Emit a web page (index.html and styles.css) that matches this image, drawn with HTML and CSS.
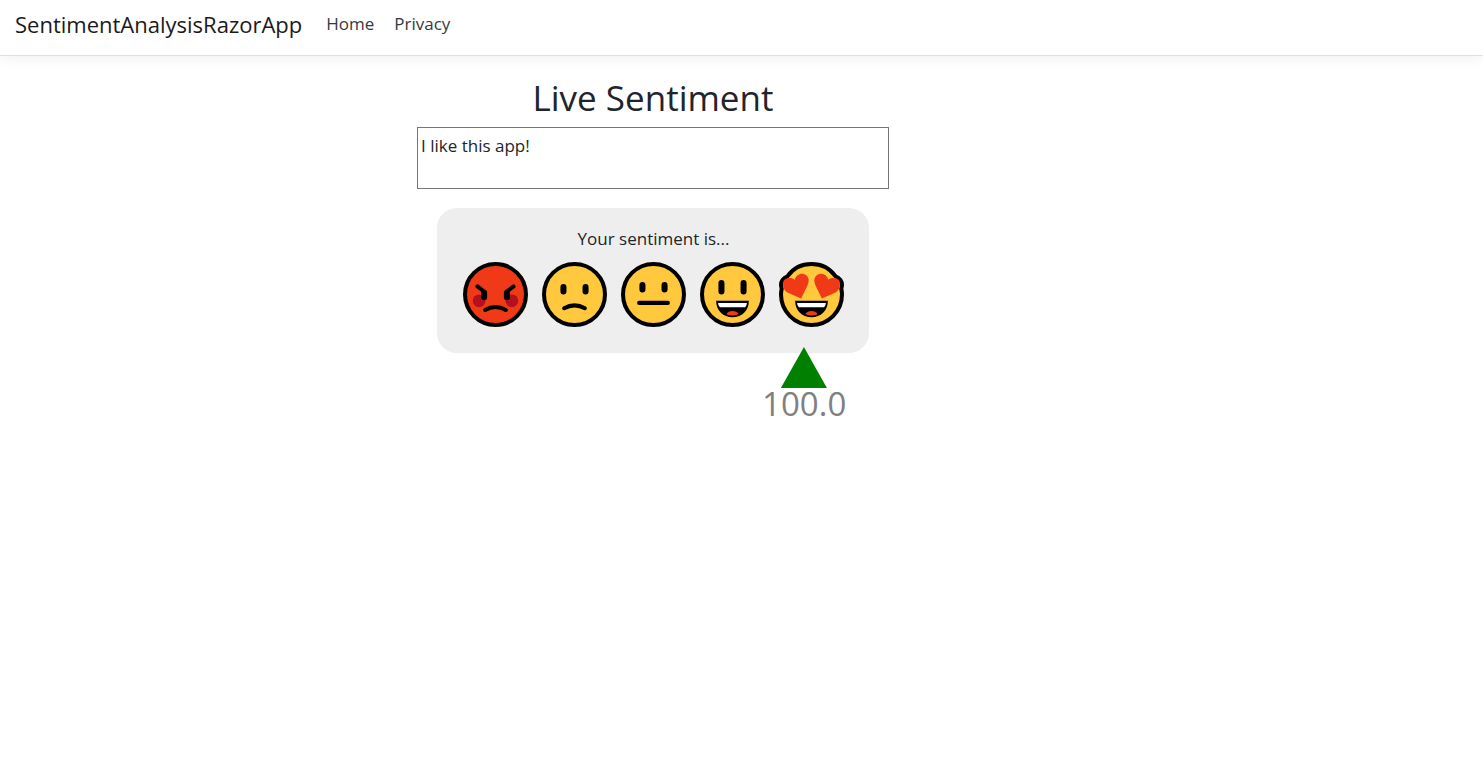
FILE: index.html
```html
<!DOCTYPE html>
<html lang="en">
<head>
<meta charset="utf-8">
<meta name="viewport" content="width=device-width, initial-scale=1">
<title>Live Sentiment - SentimentAnalysisRazorApp</title>
<link rel="stylesheet" href="styles.css">
</head>
<body>
<header>
  <nav class="navbar">
    <a class="brand" href="#">SentimentAnalysisRazorApp</a>
    <a class="nav-link" href="#">Home</a>
    <a class="nav-link" href="#">Privacy</a>
  </nav>
</header>
<main class="content">
  <h1 class="title"><label for="message">Live Sentiment</label></h1>
  <textarea id="message" class="message" rows="2">I like this app!</textarea>
  <section class="sentiment">
    <p class="caption">Your sentiment is...</p>
    <div class="faces">
      <svg class="face" viewBox="-100 -100 200 200" role="img" aria-label="Angry">
        <circle class="skin angry" r="91"/>
        <circle class="cheek" cx="-49" cy="19" r="19"/>
        <circle class="cheek" cx="49" cy="19" r="19"/>
        <path class="line" d="M-54-24L-34-9M54-24L34-9"/>
        <path class="eye" d="M-34-5V8M34-5V8"/>
        <path class="line" d="M-31 46Q0 29 31 46"/>
      </svg>
      <svg class="face" viewBox="-100 -100 200 200" role="img" aria-label="Sad">
        <circle class="skin" r="91"/>
        <path class="eye" d="M-33-22V-9M33-22V-9"/>
        <path class="line" d="M-31 41Q0 24 31 41"/>
      </svg>
      <svg class="face" viewBox="-100 -100 200 200" role="img" aria-label="Neutral">
        <circle class="skin" r="91"/>
        <path class="eye" d="M-33-28V-15M33-28V-15"/>
        <path class="line" d="M-43 25H43"/>
      </svg>
      <svg class="face" viewBox="-100 -100 200 200" role="img" aria-label="Happy">
        <circle class="skin" r="91"/>
        <path class="eye" d="M-33-34V-9M33-34V-9"/>
        <path d="M-49 19H49C48 50 28 68 0 68S-48 50-49 19Z"/>
        <path class="teeth" d="M-43 25H43Q43 32 38 38H-38Q-43 32-43 25Z"/>
        <path class="tongue" d="M-18 59C-13 46 13 46 18 59Q0 67-18 59Z"/>
      </svg>
      <svg class="face" viewBox="-100 -100 200 200" role="img" aria-label="In love">
        <path class="skin" d="M0-91C-31-91-56-77-72-54C-84-50-92-38-91-28Q-90-22-89-17Q-91-8-91 0A91 91 0 0 0 91 0Q91-8 89-17Q90-22 91-28C92-38 84-50 72-54C56-77 31-91 0-91Z"/>
        <path class="heart" d="M-31 12L-70-5C-85-12-88-32-82-43C-72-51-58-51-50-44C-46-61-27-67-15-57C-6-49-7-38-13-25Z"/>
        <path class="heart" d="M31 12L70-5C85-12 88-32 82-43C72-51 58-51 50-44C46-61 27-67 15-57C6-49 7-38 13-25Z"/>
        <path d="M-49 19H49C48 50 28 68 0 68S-48 50-49 19Z"/>
        <path class="teeth" d="M-43 25H43Q43 32 38 38H-38Q-43 32-43 25Z"/>
        <path class="tongue" d="M-18 59C-13 46 13 46 18 59Q0 67-18 59Z"/>
      </svg>
    </div>
    <div class="marker" style="left:85%">
      <svg class="pointer" viewBox="0 0 46 41" aria-hidden="true"><path d="M23 0L46 41H0Z"/></svg>
      <output class="score" for="message">100.0</output>
    </div>
  </section>
</main>
</body>
</html>
```

FILE: styles.css
```css
* {
  box-sizing: border-box;
}

body {
  min-height: 100vh;
  margin: 0;
  background: #fff;
  color: #212529;
  font-family: "Open Sans", "Noto Sans", sans-serif;
  font-size: 17px;
  line-height: 28px;
}

.navbar {
  display: flex;
  align-items: center;
  min-height: 56px;
  padding: 0 15px 8px;
  border-bottom: 1px solid #dee2e6;
  box-shadow: 0 4px 12px rgba(0, 0, 0, 0.05);
}

.brand {
  margin-right: 14px;
  color: #1a1a1a;
  font-size: 22px;
  text-decoration: none;
}

.nav-link {
  padding: 0 10px;
  color: #343a40;
  text-decoration: none;
}

.content {
  display: flex;
  flex-direction: column;
  align-items: center;
  max-width: 1306px;
  padding: 20px 0 80px;
}

.title {
  margin: 0 0 7px;
  font-size: 35px;
  font-weight: 400;
  line-height: 44px;
}

.message {
  width: 472px;
  max-width: 100%;
  padding: 4px 3px 0;
  border: 1px solid #767676;
  border-radius: 0;
  color: inherit;
  font: inherit;
  overflow: hidden;
  resize: none;
}

.sentiment {
  position: relative;
  margin-top: 19px;
  padding: 17px 24px 25px 25px;
  border-radius: 20px;
  background: #eee;
}

.caption {
  margin: 0 0 8px;
  text-align: center;
}

.faces {
  display: flex;
  gap: 12px;
}

.face {
  width: 67px;
  height: 67px;
}

.skin {
  fill: #ffc83d;
  stroke: #000;
  stroke-width: 12;
}

.angry {
  fill: #f03a17;
}

.cheek {
  fill: #b5101f;
}

.line,
.eye {
  fill: none;
  stroke: #000;
  stroke-linecap: round;
  stroke-width: 12;
}

.eye {
  stroke-width: 18;
}

.teeth {
  fill: #fff;
}

.tongue,
.heart {
  fill: #f03a17;
}

.marker {
  position: absolute;
  top: 139px;
  display: flex;
  flex-direction: column;
  align-items: center;
  transform: translateX(-50%);
}

.pointer {
  width: 46px;
  height: 41px;
  fill: #008000;
}

.score {
  color: #808080;
  font-size: 33px;
  line-height: 32px;
}
```
